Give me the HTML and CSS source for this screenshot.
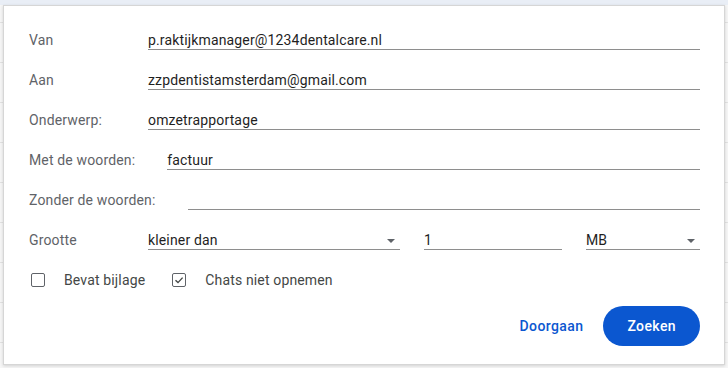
FILE: index.html
```html
<!DOCTYPE html>
<html lang="nl">
<head>
    <meta charset="UTF-8">
    <meta name="viewport" content="width=device-width, initial-scale=1.0">
    <title>Zoeken</title>
    <link rel="stylesheet" href="styles.css">
</head>
<body>

<div class="dialog">
    <div class="row">
        <label class="label">Van</label>
        <div class="field">p.raktijkmanager@1234dentalcare.nl</div>
    </div>
    <div class="row">
        <label class="label">Aan</label>
        <div class="field">zzpdentistamsterdam@gmail.com</div>
    </div>
    <div class="row">
        <label class="label">Onderwerp:</label>
        <div class="field">omzetrapportage</div>
    </div>
    <div class="row">
        <label class="label">Met de woorden:</label>
        <div class="field">factuur</div>
    </div>
    <div class="row">
        <label class="label">Zonder de woorden:</label>
        <div class="field"></div>
    </div>
    <div class="row">
        <label class="label">Grootte</label>
        <div class="size-group">
            <div class="field select size-op">kleiner dan<span class="arrow"></span></div>
            <div class="field size-num">1</div>
            <div class="field select size-unit">MB<span class="arrow"></span></div>
        </div>
    </div>

    <div class="checks">
        <div class="check">
            <span class="box"></span>
            <span>Bevat bijlage</span>
        </div>
        <div class="check">
            <span class="box">
                <svg width="10" height="10" viewBox="0 0 10 10"><path d="M1.5 5.2 L4 7.6 L8.6 2.6" fill="none" stroke="#444746" stroke-width="1.4"/></svg>
            </span>
            <span>Chats niet opnemen</span>
        </div>
    </div>

    <div class="actions">
        <button class="btn-text">Doorgaan</button>
        <button class="btn-primary">Zoeken</button>
    </div>
</div>

</body>
</html>
```

FILE: styles.css
```css
html, body {
    margin: 0;
    height: 100%;
}

body {
    font-family: Roboto, "Liberation Sans", sans-serif;
    font-size: 14px;
    letter-spacing: 0.15px;
    color: #1f1f1f;
    background:
        linear-gradient(#e9eef6 0 5px, transparent 5px),
        repeating-linear-gradient(to bottom, #f6f6f6 0 22px, #e2e2e2 22px 23px, #f6f6f6 23px 40px);
    padding-top: 5px;
    box-sizing: border-box;
}

.dialog {
    box-sizing: border-box;
    width: 722px;
    height: 360px;
    margin-left: 3px;
    background: #fff;
    border: 1px solid #d6d6d6;
    box-shadow: 0 1px 3px rgba(0, 0, 0, 0.15);
    padding: 4px 24px 0 25px;
}

.row {
    display: flex;
    align-items: flex-end;
    height: 40px;
}

.label {
    min-width: 87px;
    margin-right: 32px;
    line-height: 18px;
    color: #5f6368;
    white-space: nowrap;
    padding-bottom: 1px;
}

.field {
    flex: 1;
    position: relative;
    line-height: 18px;
    height: 18px;
    border-bottom: 1px solid #8e8e8e;
    color: #1f1f1f;
}

.size-group {
    flex: 1;
    display: flex;
    gap: 24px;
}

.size-op {
    flex: none;
    width: 252px;
}

.size-num {
    flex: none;
    width: 138px;
}

.size-unit {
    flex: 1;
}

.arrow {
    position: absolute;
    right: 5px;
    top: 8px;
    width: 0;
    height: 0;
    border-left: 4px solid transparent;
    border-right: 4px solid transparent;
    border-top: 4px solid #5f6368;
}

.checks {
    display: flex;
    gap: 27px;
    margin-top: 20px;
    height: 20px;
    align-items: center;
    padding-left: 2px;
}

.check {
    display: flex;
    align-items: center;
    gap: 19px;
    color: #444746;
    line-height: 20px;
}

.box {
    box-sizing: border-box;
    width: 14px;
    height: 14px;
    border: 1.5px solid #5f6368;
    border-radius: 2px;
    display: flex;
    align-items: center;
    justify-content: center;
}

.actions {
    display: flex;
    justify-content: flex-end;
    align-items: center;
    gap: 8px;
    margin-top: 16px;
}

.actions button {
    font-family: Roboto, "Liberation Sans", sans-serif;
    font-size: 14px;
    font-weight: 500;
    letter-spacing: 0.4px;
    height: 40px;
    border: none;
    border-radius: 20px;
    cursor: pointer;
}

.btn-text {
    background: none;
    color: #0b57d0;
    padding: 0 12px;
}

.btn-primary {
    background: #0b57d0;
    color: #fff;
    padding: 0 24px;
}
```
